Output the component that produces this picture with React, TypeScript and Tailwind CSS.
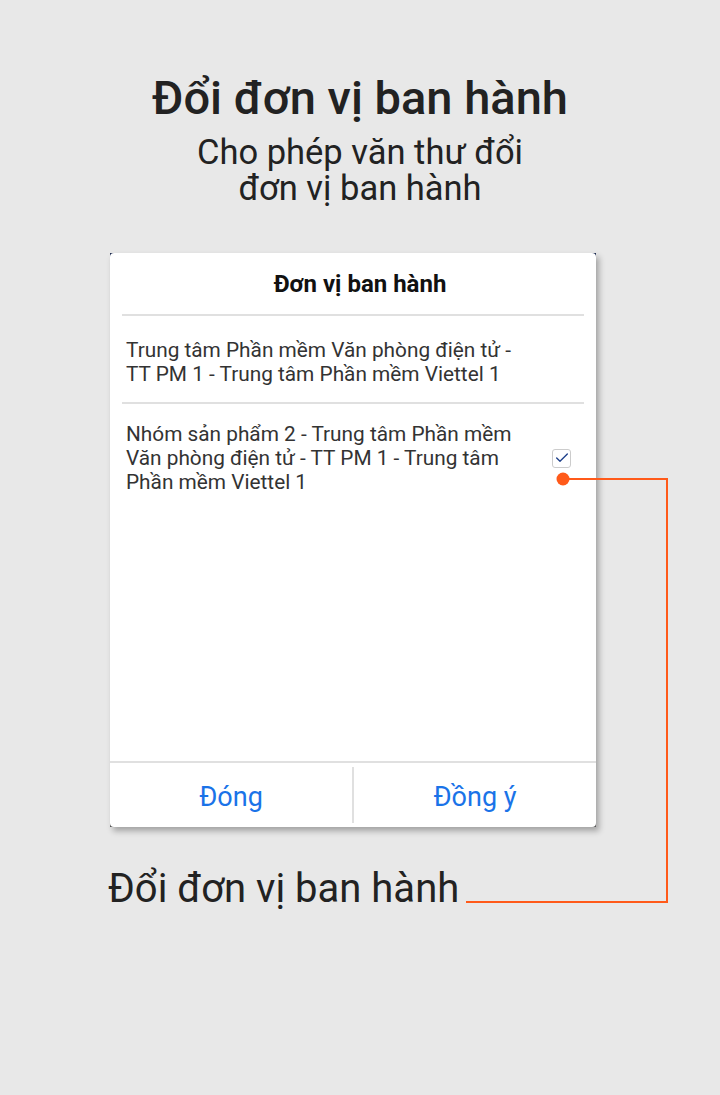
import { Check } from 'lucide-react';

const units = [
  {
    id: 1,
    name: 'Trung tâm Phần mềm Văn phòng điện tử - TT PM 1 - Trung tâm Phần mềm Viettel 1',
    checked: false,
  },
  {
    id: 2,
    name: 'Nhóm sản phẩm 2 - Trung tâm Phần mềm Văn phòng điện tử - TT PM 1 - Trung tâm Phần mềm Viettel 1',
    checked: true,
  },
];

export default function App() {
  return (
    <div
      className="relative flex h-[1095px] w-[720px] flex-col items-center bg-[#e8e8e8] text-[#222]"
      style={{ fontFamily: 'Roboto, "Noto Sans", sans-serif' }}
    >
      <h1 className="mt-[70px] text-[47px] font-medium leading-[56px] text-[#222]">
        Đổi đơn vị ban hành
      </h1>
      <p className="mt-[8px] text-center text-[34.5px] leading-[36px] text-[#222]">
        Cho phép văn thư đổi
        <br />
        đơn vị ban hành
      </p>

      <div className="mt-[47px] w-[486px] self-start ml-[110px] bg-gradient-to-b from-[#1c2a4f] to-[#555] shadow-[3px_4px_6px_rgba(0,0,0,0.3)]">
        <div className="flex h-[574px] flex-col rounded-[4px] bg-white">
          <div className="mx-3 flex h-[63px] items-center justify-center border-b-2 border-[#e0e0e0] pl-[14px]">
            <span className="text-[24px] font-bold text-[#111]">Đơn vị ban hành</span>
          </div>
          <div className="flex-1">
            {units.map((u, i) => (
              <div
                key={u.id}
                className={`mx-3 flex items-center pb-[16px] ${
                  i === 0 ? 'pt-[22px] border-b-2 border-[#e0e0e0]' : 'pt-[18px]'
                }`}
              >
                <p className="w-[400px] pl-[4px] text-[20.8px] leading-[24px] text-[#333]">
                  {u.name}
                </p>
                {u.checked && (
                  <div className="ml-auto mr-[13px] flex h-[19px] w-[19px] items-center justify-center rounded-[3px] border border-[#ccc]">
                    <Check className="h-4 w-4 text-[#1d3f8a]" strokeWidth={2} />
                  </div>
                )}
              </div>
            ))}
          </div>
          <div className="flex h-[66px] border-t-2 border-[#e0e0e0]">
            <button className="flex-1 pt-[4px] text-[27px] text-[#1a73e8]">Đóng</button>
            <div className="my-[4px] w-[2px] bg-[#e0e0e0]" />
            <button className="flex-1 pt-[4px] text-[27px] text-[#1a73e8]">Đồng ý</button>
          </div>
        </div>
      </div>

      <div className="mt-[38px] w-full pl-[108px] text-[40px] leading-[48px] text-[#222]">
        Đổi đơn vị ban hành
      </div>

      <svg
        className="pointer-events-none absolute left-0 top-0"
        width="720"
        height="1095"
        viewBox="0 0 720 1095"
      >
        <circle cx="563" cy="479" r="6.5" fill="#ff5a1a" />
        <polyline
          points="563,479 667,479 667,902 466,902"
          fill="none"
          stroke="#ff5a1a"
          strokeWidth="2"
        />
      </svg>
    </div>
  );
}
